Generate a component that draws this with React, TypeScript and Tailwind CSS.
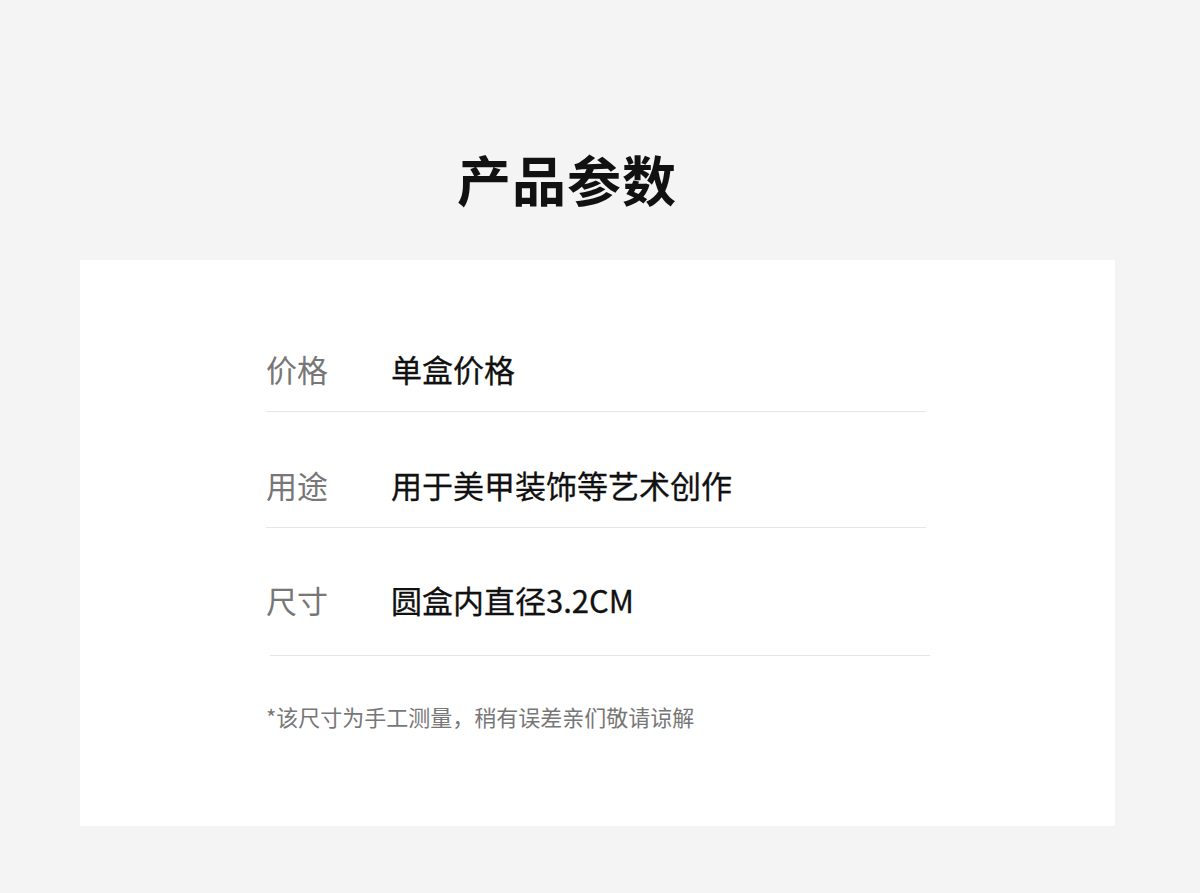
import React from 'react';

const specs = [
  { label: '价格', value: '单盒价格' },
  { label: '用途', value: '用于美甲装饰等艺术创作' },
  { label: '尺寸', value: '圆盒内直径3.2CM' },
];

export default function App() {
  return (
    <div
      className="w-[1200px] h-[893px] bg-[#f4f4f4] overflow-hidden"
      style={{ fontFamily: '"Noto Sans CJK SC", "Noto Sans", sans-serif' }}
    >
      {/* Heading */}
      <div className="flex justify-center pr-[66px] pt-[149px]">
        <h1 className="text-[54px] leading-[60px] font-bold text-[#111] tracking-[1px]">产品参数</h1>
      </div>

      {/* Card */}
      <div className="ml-[80px] mt-[51px] w-[1035px] h-[566px] bg-white pt-[36px]">
        <div className="ml-[186px] w-[664px]">
          {specs.map((s, i) => (
            <div key={s.label}>
              <div className={i === 2 ? 'flex items-center pt-[56px] pb-[39px]' : 'flex items-center pt-[57px] pb-[26px]'}>
                <span className="w-[125px] text-[31px] leading-[32px] text-[#777]">{s.label}</span>
                <span className="text-[31px] leading-[32px] text-[#111] [-webkit-text-stroke:0.3px_#111]">{s.value}</span>
              </div>
              <div className={i === 2 ? 'ml-[4px] h-px bg-[#e6e6e6]' : 'mr-[4px] h-px bg-[#e6e6e6]'} />
            </div>
          ))}
          <p className="mt-[46px] text-[22px] leading-[28px] text-[#777]">*该尺寸为手工测量，稍有误差亲们敬请谅解</p>
        </div>
      </div>
    </div>
  );
}
